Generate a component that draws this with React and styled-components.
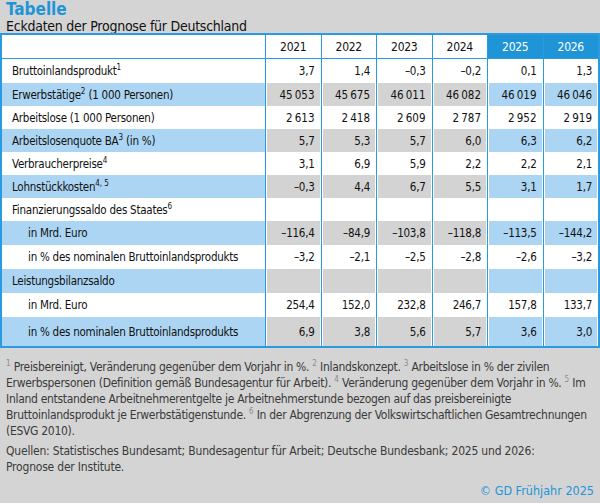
import React from 'react';
import styled, { createGlobalStyle, css } from 'styled-components';

const GlobalStyle = createGlobalStyle`
  html, body {
    margin: 0;
    padding: 0;
    background: #d4d4d4;
  }
  body {
    font-family: 'DejaVu Sans Condensed', 'DejaVu Sans', 'Liberation Sans', sans-serif;
    color: #111;
  }
`;

const BLUE = '#2a9be0';
const HEAD_BLUE = '#1f95d8';
const LIGHT_BLUE = '#abd5f3';
const GRAY = '#d3d3d3';

const Page = styled.div`
  width: 600px;
  height: 503px;
  background: #d4d4d4;
  display: flex;
  flex-direction: column;
  overflow: hidden;
`;

const Header = styled.header`
  padding: 0 0 0 6px;
  display: flex;
  flex-direction: column;
`;

const Title = styled.h1`
  margin: 0;
  font-size: 17px;
  line-height: 19px;
  font-weight: bold;
  color: ${HEAD_BLUE};
`;

const Subtitle = styled.h2`
  margin: 0;
  font-size: 14px;
  line-height: 14px;
  font-weight: normal;
  letter-spacing: -0.25px;
  color: #111;
`;

const Table = styled.table`
  width: 600px;
  border: 2px solid ${BLUE};
  border-collapse: separate;
  border-spacing: 0;
  table-layout: fixed;
  background: #fff;
  font-size: 11.5px;
  letter-spacing: -0.25px;
`;

const toneBg = {
  white: '#fff',
  gray: GRAY,
  blue: LIGHT_BLUE,
};

const HeadCell = styled.th`
  height: 23px;
  padding: 0;
  font-weight: normal;
  font-size: 12px;
  text-align: center;
  border-bottom: 1px solid ${BLUE};
  border-left: ${(p) => (p.$first ? 'none' : `1px solid ${BLUE}`)};
  background: ${(p) => (p.$forecast ? HEAD_BLUE : '#fff')};
  color: ${(p) => (p.$forecast ? '#fff' : '#111')};
`;

const LabelCell = styled.td`
  height: ${(p) => p.$h}px;
  padding: 0 0 0 ${(p) => (p.$indent ? 26 : 10)}px;
  white-space: nowrap;
  background: ${(p) => (p.$striped ? LIGHT_BLUE : '#fff')};
  color: #111;
`;

const ValueCell = styled.td`
  height: ${(p) => p.$h}px;
  padding: 0 6px 0 0;
  text-align: right;
  white-space: nowrap;
  border-left: 1px solid ${BLUE};
  background: ${(p) => toneBg[p.$tone]};
  ${(p) =>
    p.$tone !== 'white' &&
    css`
      box-shadow: inset 1px 0 0 #fff, inset -1px 0 0 #fff;
    `}
`;

const Sup = styled.sup`
  font-size: 8px;
  line-height: 0;
  vertical-align: baseline;
  position: relative;
  top: -5px;
  letter-spacing: 0;
`;

const Notes = styled.section`
  flex: 1;
  display: flex;
  flex-direction: column;
  padding: 11px 4px 4px 6px;
  font-size: 12px;
  line-height: 16px;
  letter-spacing: -0.3px;
  color: #3a3a3a;
`;

const NoteText = styled.p`
  margin: 0;
`;

const NoteSup = styled.sup`
  font-size: 8px;
  line-height: 0;
  vertical-align: baseline;
  position: relative;
  top: -5px;
  color: #8c8c8c;
  letter-spacing: 0;
`;

const Sources = styled.p`
  margin: 4px 0 0 0;
  letter-spacing: -0.2px;
`;

const Copyright = styled.div`
  margin-top: auto;
  padding-right: 2px;
  text-align: right;
  color: ${HEAD_BLUE};
  font-size: 12.5px;
  line-height: 16px;
  letter-spacing: 0;
`;

const years = ['2021', '2022', '2023', '2024', '2025', '2026'];
const forecastFrom = 4;
const empty = ['', '', '', '', '', ''];

const rows = [
  { label: 'Bruttoinlandsprodukt', sup: '1', values: ['3,7', '1,4', '–0,3', '–0,2', '0,1', '1,3'], h: 24 },
  { label: 'Erwerbstätige', sup: '2', suffix: ' (1\u00a0000 Personen)', values: ['45\u202f053', '45\u202f675', '46\u202f011', '46\u202f082', '46\u202f019', '46\u202f046'], h: 23 },
  { label: 'Arbeitslose (1\u00a0000 Personen)', values: ['2\u202f613', '2\u202f418', '2\u202f609', '2\u202f787', '2\u202f952', '2\u202f919'], h: 23 },
  { label: 'Arbeitslosenquote BA', sup: '3', suffix: ' (in %)', values: ['5,7', '5,3', '5,7', '6,0', '6,3', '6,2'], h: 23 },
  { label: 'Verbraucherpreise', sup: '4', values: ['3,1', '6,9', '5,9', '2,2', '2,2', '2,1'], h: 23 },
  { label: 'Lohnstückkosten', sup: '4, 5', values: ['–0,3', '4,4', '6,7', '5,5', '3,1', '1,7'], h: 23 },
  { label: 'Finanzierungssaldo des Staates', sup: '6', values: empty, h: 23 },
  { label: 'in Mrd. Euro', indent: true, values: ['–116,4', '–84,9', '–103,8', '–118,8', '–113,5', '–144,2'], h: 24 },
  { label: 'in % des nominalen Bruttoinlandsprodukts', indent: true, values: ['–3,2', '–2,1', '–2,5', '–2,8', '–2,6', '–3,2'], h: 24 },
  { label: 'Leistungsbilanzsaldo', values: empty, h: 24 },
  { label: 'in Mrd. Euro', indent: true, values: ['254,4', '152,0', '232,8', '246,7', '157,8', '133,7'], h: 24 },
  { label: 'in % des nominalen Bruttoinlandsprodukts', indent: true, values: ['6,9', '3,8', '5,6', '5,7', '3,6', '3,0'], h: 29 },
];

const cellTone = (striped, col) => {
  if (!striped) return 'white';
  return col >= forecastFrom ? 'blue' : 'gray';
};

const App = () => {
  return (
    <Page>
      <GlobalStyle />
      <Header>
        <Title>Tabelle</Title>
        <Subtitle>Eckdaten der Prognose für Deutschland</Subtitle>
      </Header>

      <Table>
        <colgroup>
          <col style={{ width: 263 }} />
          {years.map((y) => (
            <col key={y} />
          ))}
        </colgroup>
        <thead>
          <tr>
            <HeadCell $first />
            {years.map((y, i) => (
              <HeadCell key={y} $forecast={i >= forecastFrom}>
                {y}
              </HeadCell>
            ))}
          </tr>
        </thead>
        <tbody>
          {rows.map((row, r) => {
            const striped = r % 2 === 1;
            return (
              <tr key={r}>
                <LabelCell $h={row.h} $striped={striped} $indent={row.indent}>
                  {row.label}
                  {row.sup && <Sup>{row.sup}</Sup>}
                  {row.suffix}
                </LabelCell>
                {row.values.map((v, c) => (
                  <ValueCell key={c} $h={row.h} $tone={cellTone(striped, c)}>
                    {v}
                  </ValueCell>
                ))}
              </tr>
            );
          })}
        </tbody>
      </Table>

      <Notes>
        <NoteText>
          <NoteSup>1</NoteSup> Preisbereinigt, Veränderung gegenüber dem Vorjahr in %. <NoteSup>2</NoteSup>{' '}
          Inlandskonzept. <NoteSup>3</NoteSup> Arbeitslose in % der zivilen Erwerbspersonen (Definition gemäß
          Bundesagentur für Arbeit). <NoteSup>4</NoteSup> Veränderung gegenüber dem Vorjahr in %.{' '}
          <NoteSup>5</NoteSup>&nbsp;Im Inland entstandene Arbeitnehmerentgelte je Arbeitnehmerstunde bezogen auf das
          preisbereinigte Bruttoinlandsprodukt je Erwerbstätigenstunde. <NoteSup>6</NoteSup> In der Abgrenzung der
          Volkswirtschaftlichen Gesamtrechnungen (ESVG 2010).
        </NoteText>
        <Sources>
          Quellen: Statistisches Bundesamt; Bundesagentur für Arbeit; Deutsche Bundesbank; 2025 und 2026:
          <br />
          Prognose der Institute.
        </Sources>
        <Copyright>© GD Frühjahr 2025</Copyright>
      </Notes>
    </Page>
  );
};

export default App;
